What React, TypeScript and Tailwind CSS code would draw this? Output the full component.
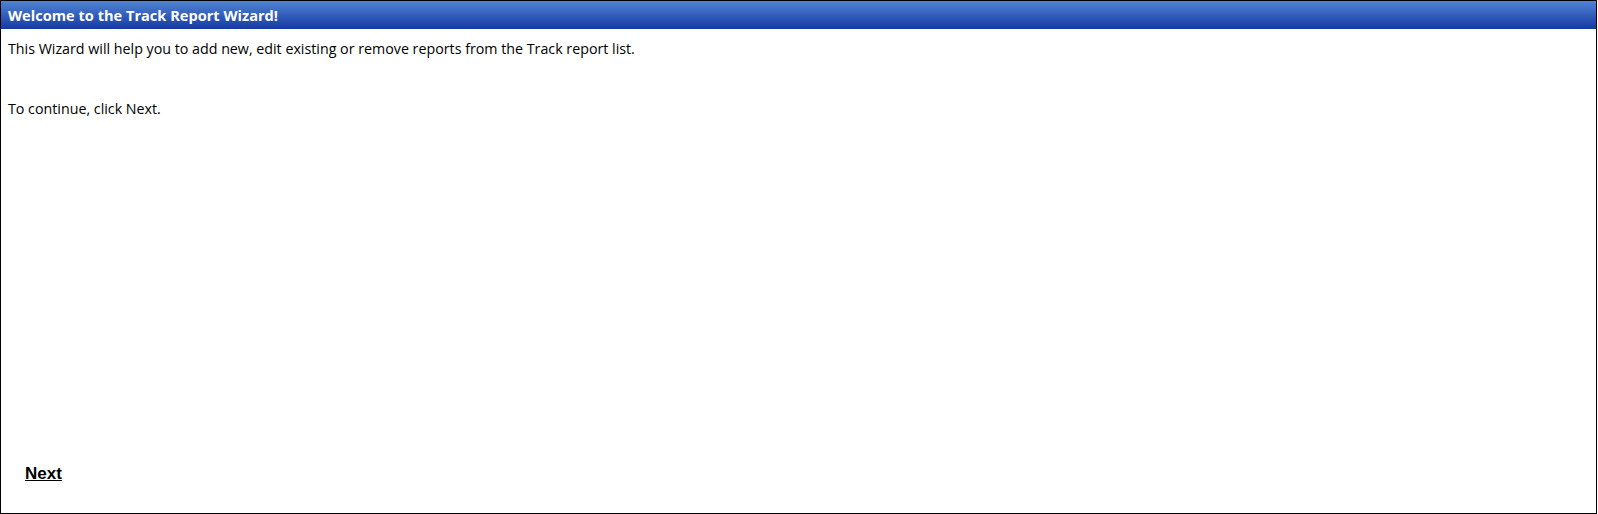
export default function App() {
  return (
    <div className="w-[1598px] h-[514px] bg-white" style={{ fontFamily: '"Open Sans", "Noto Sans", sans-serif' }}>
      <div className="flex flex-col h-[514px] w-[1597px] border border-black">
        {/* Title bar */}
        <div className="h-[28px] flex items-center px-[7px] bg-gradient-to-b from-[#5283d6] to-[#1739a0]">
          <span className="text-white font-bold text-[14.6px] leading-none">Welcome to the Track Report Wizard!</span>
        </div>

        {/* Body */}
        <div className="flex-1 flex flex-col px-[7px] text-[14.25px] text-black">
          <p className="mt-[10px] leading-[19px]">
            This Wizard will help you to add new, edit existing or remove reports from the Track report list.
          </p>
          <p className="mt-[41px] leading-[19px]">To continue, click Next.</p>

          <div className="mt-auto mb-[29px] pl-[17px]">
            <a
              href="#"
              className="text-black font-bold text-[17px] underline leading-none"
              style={{ fontFamily: '"Liberation Sans", Arial, sans-serif' }}
            >
              Next
            </a>
          </div>
        </div>
      </div>
    </div>
  );
}
